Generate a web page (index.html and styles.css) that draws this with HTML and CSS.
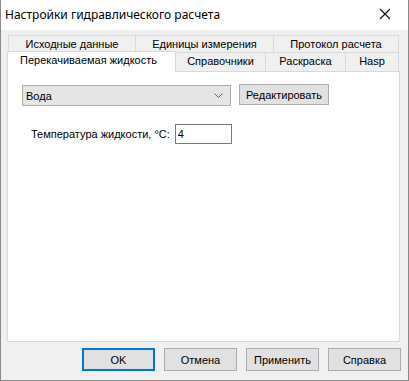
FILE: index.html
```html
<!DOCTYPE html>
<html lang="ru">
<head>
  <meta charset="UTF-8" />
  <title>Настройки гидравлического расчета</title>
  <link rel="stylesheet" href="styles.css">
</head>
<body>
  <div class="window">
    <!-- Заголовок окна -->
    <div class="titlebar">
      <span class="title">Настройки гидравлического расчета</span>
      <svg class="close" width="12" height="12" viewBox="0 0 12 12">
        <path d="M1 1 L11 11 M11 1 L1 11" stroke="#111" stroke-width="1.1" fill="none"/>
      </svg>
    </div>

    <div class="content">
      <!-- Вкладки -->
      <div class="tabs">
        <div class="tab-row back">
          <div class="tab w1">Исходные данные</div>
          <div class="tab w2">Единицы измерения</div>
          <div class="tab w3">Протокол расчета</div>
        </div>
        <div class="tab-row front">
          <div class="tab active w4">Перекачиваемая жидкость</div>
          <div class="tab w5">Справочники</div>
          <div class="tab w6">Раскраска</div>
          <div class="tab w7">Hasp</div>
        </div>
      </div>

      <!-- Панель вкладки -->
      <div class="panel">
        <div class="fluid-row">
          <div class="combo">
            <span>Вода</span>
            <svg width="9" height="6" viewBox="0 0 9 6">
              <path d="M0.5 0.5 L4.5 4.5 L8.5 0.5" stroke="#606060" stroke-width="1" fill="none"/>
            </svg>
          </div>
          <button class="btn edit">Редактировать</button>
        </div>
        <div class="temp-row">
          <label>Температура жидкости, °C:</label>
          <div class="field">4</div>
        </div>
      </div>

      <!-- Кнопки диалога -->
      <div class="buttons">
        <button class="btn default">OK</button>
        <button class="btn">Отмена</button>
        <button class="btn">Применить</button>
        <button class="btn">Справка</button>
      </div>
    </div>
  </div>
</body>
</html>
```

FILE: styles.css
```css
/* Общие стили */
body {
  margin: 0;
  padding: 0;
  font-family: "Liberation Sans", Arial, sans-serif;
  font-size: 11px;
  color: #000;
  background: #fff;
}

.window {
  width: 409px;
  height: 381px;
  box-sizing: border-box;
  border: 1px solid #8a8a8a;
  border-top: none;
  background: #f0f0f0;
  display: flex;
  flex-direction: column;
}

.titlebar {
  height: 30px;
  background: #fff;
  display: flex;
  align-items: center;
  justify-content: space-between;
  padding: 0 17px 0 4px;
}

.title {
  font-family: "Noto Sans", sans-serif;
  font-size: 12px;
  margin-top: -2px;
}

.close {
  margin-top: -2px;
}

.content {
  flex: 1;
  padding: 5px 8px 0 6px;
}

/* Вкладки */
.tab-row {
  display: flex;
}

.tab-row.back {
  margin-left: 1px;
  height: 17px;
}

.tab-row.front {
  height: 20px;
  align-items: flex-end;
  margin-top: -1px;
}

.tab {
  box-sizing: border-box;
  border: 1px solid #d9d9d9;
  border-bottom: none;
  background: #f0f0f0;
  text-align: center;
  line-height: 16px;
  height: 17px;
  margin-right: -1px;
}

.tab-row.front .tab {
  height: 19px;
  line-height: 17px;
}

.tab-row.front .tab.active {
  height: 21px;
  background: #fff;
  line-height: 16px;
  text-align: left;
  padding-left: 12px;
  position: relative;
  z-index: 1;
  margin-bottom: -1px;
}

.w1 { width: 128px; }
.w2 { width: 139px; }
.w3 { width: 126px; }
.w4 { width: 169px; }
.w5 { width: 91px; }
.w6 { width: 81px; }
.w7 { width: 54px; }

.panel {
  box-sizing: border-box;
  width: 393px;
  height: 271px;
  background: #fff;
  border: 1px solid #d9d9d9;
  padding: 13px 0 0 14px;
}

.fluid-row {
  display: flex;
  gap: 8px;
}

.combo {
  box-sizing: border-box;
  width: 209px;
  height: 21px;
  background: #e5e5e5;
  border: 1px solid #adadad;
  display: flex;
  align-items: center;
  justify-content: space-between;
  padding: 0 7px 0 3px;
}

.btn {
  box-sizing: border-box;
  font-family: "Liberation Sans", Arial, sans-serif;
  font-size: 11px;
  background: #e1e1e1;
  border: 1px solid #adadad;
  padding: 0;
  color: #000;
}

.btn.edit {
  width: 90px;
  height: 21px;
  margin-top: -1px;
}

.temp-row {
  display: flex;
  align-items: center;
  gap: 5px;
  margin: 18px 0 0 9px;
}

.field {
  box-sizing: border-box;
  width: 57px;
  height: 20px;
  border: 1px solid #7a7a7a;
  background: #fff;
  padding-left: 2px;
  line-height: 18px;
}

/* Кнопки внизу */
.buttons {
  display: flex;
  justify-content: flex-end;
  gap: 9px;
  margin-top: 6px;
  margin-right: -1px;
}

.buttons .btn {
  width: 73px;
  height: 23px;
}

.btn.default {
  border: 2px solid #0078d7;
}
```
